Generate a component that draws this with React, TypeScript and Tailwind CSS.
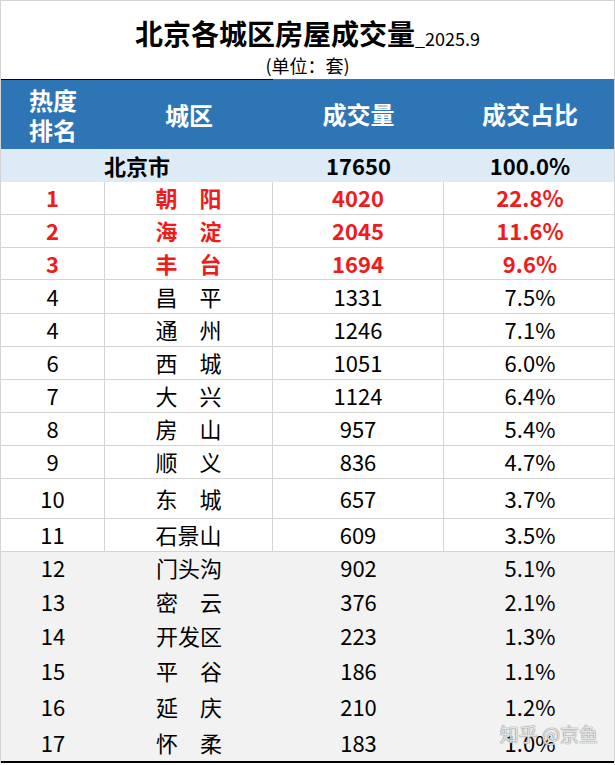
const topRows = [
  { rank: "1", name: "朝　阳", count: "4020", share: "22.8%", hot: true, h: "h-[33px]" },
  { rank: "2", name: "海　淀", count: "2045", share: "11.6%", hot: true, h: "h-[33px]" },
  { rank: "3", name: "丰　台", count: "1694", share: "9.6%", hot: true, h: "h-[32px]" },
  { rank: "4", name: "昌　平", count: "1331", share: "7.5%", hot: false, h: "h-[34px]" },
  { rank: "4", name: "通　州", count: "1246", share: "7.1%", hot: false, h: "h-[33px]" },
  { rank: "6", name: "西　城", count: "1051", share: "6.0%", hot: false, h: "h-[33px]" },
  { rank: "7", name: "大　兴", count: "1124", share: "6.4%", hot: false, h: "h-[33px]" },
  { rank: "8", name: "房　山", count: "957", share: "5.4%", hot: false, h: "h-[33px]" },
  { rank: "9", name: "顺　义", count: "836", share: "4.7%", hot: false, h: "h-[33px]" },
  { rank: "10", name: "东　城", count: "657", share: "3.7%", hot: false, h: "h-[40px]" },
  { rank: "11", name: "石景山", count: "609", share: "3.5%", hot: false, h: "h-[33px]" },
];

const outerRows = [
  { rank: "12", name: "门头沟", count: "902", share: "5.1%", h: "h-[33px]" },
  { rank: "13", name: "密　云", count: "376", share: "2.1%", h: "h-[34px]" },
  { rank: "14", name: "开发区", count: "223", share: "1.3%", h: "h-[34px]" },
  { rank: "15", name: "平　谷", count: "186", share: "1.1%", h: "h-[36px]" },
  { rank: "16", name: "延　庆", count: "210", share: "1.2%", h: "h-[36px]" },
  { rank: "17", name: "怀　柔", count: "183", share: "1.0%", h: "h-[36px]" },
];

const cols = "grid grid-cols-[104px_168px_171px_172px]";

function WhiteRow({ rank, name, count, share, hot, h }: any) {
  const cell = `flex items-center justify-center pb-[2px] border-b border-[#d4d4d4] ${h}`;
  const text = hot ? "font-bold text-[#ee1c1c]" : "text-black";
  return (
    <div className={`${cols} bg-white text-[22px] leading-none ${text}`}>
      <div className={`${cell} border-r`}>{rank}</div>
      <div className={`${cell} border-r`}>{name}</div>
      <div className={`${cell} border-r`}>{count}</div>
      <div className={cell}>{share}</div>
    </div>
  );
}

function GrayRow({ rank, name, count, share, h }: any) {
  const cell = `flex items-center justify-center pb-[3px] ${h}`;
  return (
    <div className={`${cols} bg-[#f2f2f2] text-[22px] leading-none text-black`}>
      <div className={cell}>{rank}</div>
      <div className={cell}>{name}</div>
      <div className={cell}>{count}</div>
      <div className={cell}>{share}</div>
    </div>
  );
}

export default function App() {
  return (
    <div className="w-[615px] h-[765px] bg-white font-['Noto_Sans_CJK_SC','Microsoft_YaHei',sans-serif]">
      <div className="relative border border-b-0 border-[#d4d4d4]">
        <div className="h-[78px] flex flex-col items-center pt-[18px] text-black">
          <div className="h-[28px] flex items-end">
            <span className="text-[28px] font-bold leading-none">北京各城区房屋成交量</span>
            <span className="text-[18px] leading-none">_2025.9</span>
          </div>
          <div className="text-[18px] leading-none mt-[9px]">(单位：套)</div>
        </div>

        <div className={`${cols} h-[70px] bg-[#2e75b6] text-white font-bold text-[24px]`}>
          <div className="flex items-center justify-center text-center border-t border-black leading-[30px]">
            热度
            <br />
            排名
          </div>
          <div className="flex items-center justify-center border-t border-black">城区</div>
          <div className="flex items-center justify-center">成交量</div>
          <div className="flex items-center justify-center">成交占比</div>
        </div>

        <div className={`${cols} h-[33px] bg-[#ddebf7] text-black font-bold text-[22px] leading-none`}>
          <div className="col-span-2 flex items-center justify-center pb-[2px]">北京市</div>
          <div className="flex items-center justify-center pb-[2px]">17650</div>
          <div className="flex items-center justify-center pb-[2px]">100.0%</div>
        </div>

        {topRows.map((row, i) => (
          <WhiteRow key={i} {...row} />
        ))}
        {outerRows.map((row, i) => (
          <GrayRow key={i} {...row} />
        ))}
        <div className="h-[2px] bg-black" />

        <div className="absolute right-[16px] bottom-[15px] text-[19px] text-white/80 [text-shadow:0_0_1px_#777,0_0_1px_#777]">
          知乎 @京鱼
        </div>
      </div>
    </div>
  );
}
